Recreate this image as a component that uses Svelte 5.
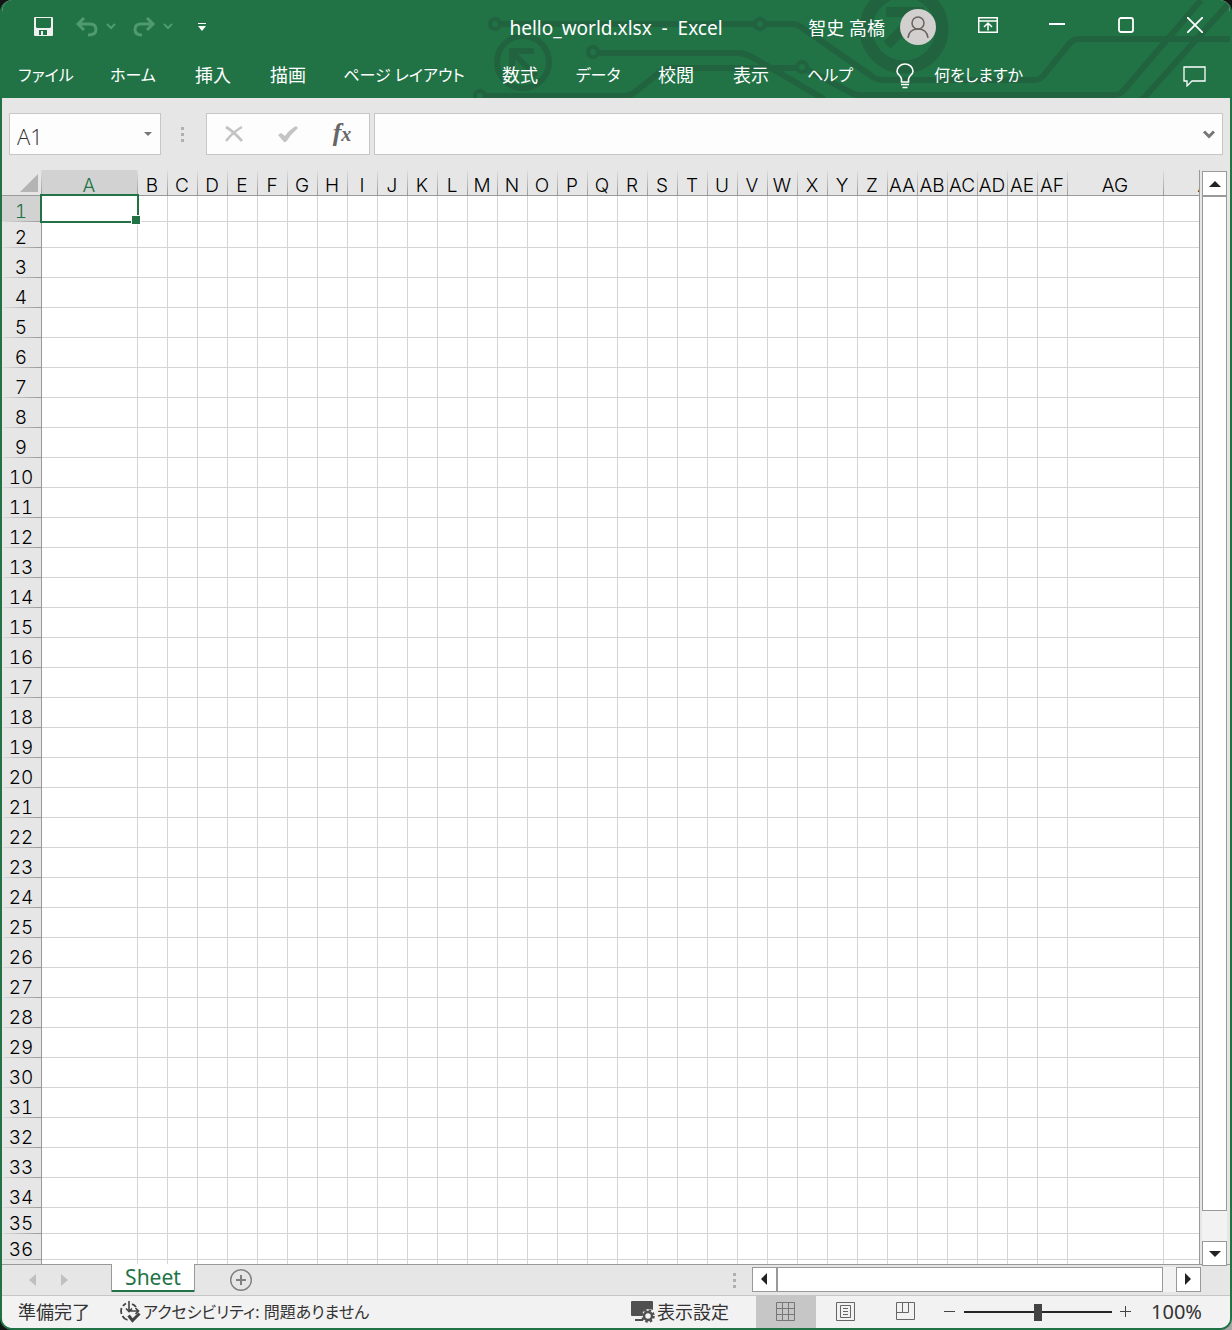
<script>
  const tabs = [
    { label: 'ファイル', kana: true },
    { label: 'ホーム', kana: true },
    { label: '挿入' },
    { label: '描画' },
    { label: 'ページ レイアウト', kana: true },
    { label: '数式' },
    { label: 'データ', kana: true },
    { label: '校閲' },
    { label: '表示' },
    { label: 'ヘルプ', kana: true }
  ];

  function columnName(index) {
    let name = '';
    for (let n = index + 1; n > 0; n = Math.floor((n - 1) / 26)) {
      name = String.fromCharCode(65 + ((n - 1) % 26)) + name;
    }
    return name;
  }

  const wideColumns = ['A', 'AG', 'AH'];
  const columns = Array.from({ length: 34 }, (_, i) => columnName(i));
  const rows = Array.from({ length: 36 }, (_, i) => i + 1);
  const isShort = (row) => row <= 2 || row >= 35;

  let zoom = $state(100);
  let formula = $state('');
  let cellName = $state('A1');
</script>

<div class="window">
  <header>
    <svg class="circuit" viewBox="470 0 762 98" width="762" height="98" aria-hidden="true">
      <g fill="none" stroke="#21633f" stroke-width="6">
        <path d="M501 24H754M766 24H792Q798 24 804 29L870 75Q876 80 884 80H1034Q1040 80 1044 75L1069 44Q1073 39 1079 39H1232" />
        <path d="M599 53H738Q744 53 752 57L824 99" />
        <path d="M486 96H624Q630 96 635 92L660 72Q665 68 671 68H796" />
        <path d="M808 70L850 92Q854 95 860 95H1114Q1120 95 1124 90L1201 0" />
        <path d="M1142 100L1230 2" />
        <circle cx="523" cy="62" r="26" />
        <path d="M509 51H534M512 48V72M512 52L536 76" />
      </g>
      <g fill="none" stroke="#21633f" stroke-width="4">
        <circle cx="495" cy="24" r="5" />
        <circle cx="760" cy="24" r="5" />
        <circle cx="593" cy="52" r="5" />
        <circle cx="802" cy="67" r="5" />
        <circle cx="480" cy="96" r="5" />
      </g>
      <g fill="none" stroke="#21633f">
        <circle cx="904" cy="29" r="38" stroke-width="13" />
        <path d="M886 12H924M887 45L920 12" stroke-width="10" />
      </g>
    </svg>

    <div class="titlebar">
      <div class="quick">
        <button class="save" aria-label="上書き保存">
          <svg width="20" height="20" viewBox="0 0 20 20">
            <path d="M0 1Q0 0 1 0H18Q19 0 19 1V18Q19 19 18 19H1Q0 19 0 18ZM2 1V10L3 11H16L17 10V1ZM5 13V18H7V14H9V18H13V13Z" fill="#f0f0f0" fill-rule="evenodd" />
          </svg>
        </button>
        <button class="history" aria-label="元に戻す">
          <svg width="42" height="20" viewBox="0 0 42 20" fill="none" stroke="#4f9a6e">
            <path d="M8 1L2 7L8 13M2 7H14Q20 7 20 12.500Q20 18 12 18" stroke-width="3" />
            <path d="M31 7L35 11L39 7" stroke-width="2" />
          </svg>
        </button>
        <button class="history" aria-label="やり直し">
          <svg width="42" height="20" viewBox="0 0 42 20" fill="none" stroke="#4f9a6e">
            <path d="M15 1L21 7L15 13M21 7H9Q3 7 3 12.500Q3 18 10 18" stroke-width="3" />
            <path d="M32 7L36 11L40 7" stroke-width="2" />
          </svg>
        </button>
        <button class="customize" aria-label="クイック アクセス ツール バーのユーザー設定">
          <svg width="8" height="8" viewBox="0 0 8 8" fill="#fff"><path d="M0 0H8V1H0ZM0 3H8L4 8Z" /></svg>
        </button>
      </div>

      <h1>hello_world.xlsx&nbsp; -&nbsp; Excel</h1>

      <div class="account">
        <button class="user">
          <span>智史 高橋</span>
          <svg width="36" height="36" viewBox="0 0 36 36" aria-hidden="true">
            <circle cx="18" cy="18" r="18" fill="#d2d0ce" />
            <g fill="none" stroke="#69625d" stroke-width="1.500">
              <circle cx="18" cy="14" r="6" />
              <path d="M8 29Q9 20 18 20Q27 20 28 29" />
            </g>
          </svg>
        </button>
        <button class="control" aria-label="リボンの表示オプション">
          <svg width="20" height="16" viewBox="0 0 20 16" fill="none" stroke="#fff" stroke-width="1.500">
            <path d="M.75 .75H19.250V15.250H.75ZM.75 4H19.250M10 13.500V7M6 10L10 6L14 10" />
          </svg>
        </button>
        <button class="control" aria-label="最小化">
          <svg width="16" height="16" viewBox="0 0 16 16"><path d="M0 7H16" stroke="#fff" stroke-width="2" /></svg>
        </button>
        <button class="control" aria-label="最大化">
          <svg width="16" height="16" viewBox="0 0 16 16"><rect x="1" y="1" width="14" height="14" rx="2" fill="none" stroke="#fff" stroke-width="1.800" /></svg>
        </button>
        <button class="control" aria-label="閉じる">
          <svg width="16" height="16" viewBox="0 0 16 16"><path d="M0 0L16 16M16 0L0 16" stroke="#fff" stroke-width="1.800" /></svg>
        </button>
      </div>
    </div>

    <nav>
      <div class="tabs">
        {#each tabs as tab}
          <button class:kana={tab.kana}>{tab.label}</button>
        {/each}
      </div>
      <button class="tell">
        <svg width="18" height="26" viewBox="0 0 18 26" fill="none" stroke="#fff" stroke-width="1.600">
          <path d="M5.500 19V16Q5 14 3.500 12.500Q1 10 1 8.500A8 7.500 0 0 1 17 8.500Q17 10 14.500 12.500Q13 14 12.500 16V19ZM5 21.500H13M6.500 24.500H11.500" />
        </svg>
        <span>何をしますか</span>
      </button>
      <button class="comments" aria-label="コメント">
        <svg width="23" height="21" viewBox="0 0 23 21" fill="none" stroke="#fff" stroke-width="1.300">
          <path d="M1 1H22V15H9L4 20V15H1Z" />
        </svg>
      </button>
    </nav>
  </header>

  <div class="formulabar">
    <div class="box namebox">
      <input aria-label="名前ボックス" bind:value={cellName} />
      <button aria-label="名前の一覧">
        <svg width="8" height="4" viewBox="0 0 8 4"><path d="M0 0H8L4 4Z" fill="#777" /></svg>
      </button>
    </div>
    <span class="grip"><i></i><i></i><i></i></span>
    <div class="box actions">
      <button aria-label="キャンセル">
        <svg width="18" height="18" viewBox="0 0 18 18" fill="none" stroke="#c3c3c3"><path d="M1 2Q8 6 17 16" stroke-width="2.800" /><path d="M17 2Q9 6 1 16" stroke-width="2.500" /></svg>
      </button>
      <button aria-label="入力">
        <svg width="20" height="18" viewBox="0 0 20 18"><path d="M0 10L3 8L7 11Q11 5 18 1L20 3Q13 9 8 17H6Z" fill="#c4c4c4" /></svg>
      </button>
      <button class="fx" aria-label="関数の挿入"><span>f</span><small>x</small></button>
    </div>
    <div class="box formula">
      <input aria-label="数式バー" bind:value={formula} />
      <button aria-label="数式バーの展開">
        <svg width="12" height="9" viewBox="0 0 12 9" fill="none"><path d="M1 1.500L6 6.500L11 1.500" stroke="#777" stroke-width="3" /></svg>
      </button>
    </div>
  </div>

  <div class="workspace">
    <div class="sheet">
      <table>
        <colgroup>
          <col class="c-head" />
          {#each columns as name}
            <col class={wideColumns.includes(name) ? 'c-wide' : 'c-cell'} />
          {/each}
        </colgroup>
        <thead>
          <tr>
            <th class="corner" aria-label="すべて選択">
              <svg width="18" height="18" viewBox="0 0 18 18"><path d="M18 0V18H0Z" fill="#b4b4b4" /></svg>
            </th>
            {#each columns as name}
              <th scope="col" class:active={name === 'A'}>{name}</th>
            {/each}
          </tr>
        </thead>
        <tbody>
          {#each rows as row}
            <tr class:short={isShort(row)}>
              <th scope="row" class:active={row === 1}>{row}</th>
              {#each columns as name}
                <td class:selected={row === 1 && name === 'A'}></td>
              {/each}
            </tr>
          {/each}
          <tr class="partial">
            <th></th>
            {#each columns as name}
              <td></td>
            {/each}
          </tr>
        </tbody>
      </table>
    </div>
    <div class="scroll vertical">
      <button aria-label="上へスクロール">
        <svg width="12" height="6" viewBox="0 0 12 6"><path d="M6 0L12 6H0Z" fill="#222" /></svg>
      </button>
      <div class="thumb"></div>
      <button aria-label="下へスクロール">
        <svg width="12" height="6" viewBox="0 0 12 6"><path d="M0 0H12L6 6Z" fill="#222" /></svg>
      </button>
    </div>
  </div>

  <div class="sheetbar">
    <div class="pager">
      <button aria-label="前のシート"><svg width="7" height="12" viewBox="0 0 7 12"><path d="M7 0V12L0 6Z" fill="#c0c0c0" /></svg></button>
      <button aria-label="次のシート"><svg width="7" height="12" viewBox="0 0 7 12"><path d="M0 0V12L7 6Z" fill="#c0c0c0" /></svg></button>
    </div>
    <button class="sheettab">Sheet</button>
    <button class="add" aria-label="新しいシート">
      <svg width="24" height="24" viewBox="0 0 24 24" fill="none" stroke="#808080">
        <circle cx="12" cy="12" r="10.300" stroke-width="1.400" /><path d="M7 12H17M12 7V17" stroke-width="2" />
      </svg>
    </button>
    <span class="grip"><i></i><i></i><i></i></span>
    <div class="scroll horizontal">
      <button aria-label="左へスクロール">
        <svg width="7" height="12" viewBox="0 0 7 12"><path d="M6 0V12L0 6Z" fill="#222" /></svg>
      </button>
      <div class="thumb"></div>
      <button aria-label="右へスクロール">
        <svg width="7" height="12" viewBox="0 0 7 12"><path d="M0 0V12L6 6Z" fill="#222" /></svg>
      </button>
    </div>
  </div>

  <footer>
    <span class="ready">準備完了</span>
    <button class="access">
      <svg width="22" height="22" viewBox="0 0 22 22" fill="none" stroke="#444">
        <path d="M7 2.500Q5 3.500 4 5M2.500 7Q1.500 10 2.500 13M3.500 15Q5 18 8.500 19M13 3Q15.500 4 17 6" stroke-width="1.800" />
        <path d="M10 0V10.500M7 7.500L10 10.500L13 7.500M10 10H19.500M16.500 7L19.500 10L16.500 13" stroke-width="1.600" />
        <path d="M9.500 14.500L13.500 19.500L20.500 12.500" stroke-width="3" />
      </svg>
      <span>アクセシビリティ: 問題ありません</span>
    </button>
    <button class="display">
      <svg width="24" height="22" viewBox="0 0 24 22">
        <path d="M1 0H21Q22 0 22 1V9Q18 7 14 9Q11 11 11 15H1Q0 15 0 14V1Q0 0 1 0ZM4 18H12V20H4Z" fill="#505050" />
        <circle cx="17" cy="15" r="4" fill="none" stroke="#505050" stroke-width="2.500" />
        <circle cx="17" cy="15" r="5.800" fill="none" stroke="#505050" stroke-width="2" stroke-dasharray="2.500 2.055" />
      </svg>
      <span>表示設定</span>
    </button>
    <div class="views">
      <button class="on" aria-label="標準">
        <svg width="20" height="19" viewBox="0 0 20 19" fill="none" stroke="#777"><path d="M.5 .5H18.500V18.500H.5ZM.5 6.500H18.500M.5 12.500H18.500M6.500 .5V18.500M12.500 .5V18.500" /></svg>
      </button>
      <button aria-label="ページ レイアウト">
        <svg width="20" height="19" viewBox="0 0 20 19" fill="none" stroke="#666"><path d="M.5 .5H18.500V18.500H.5ZM4.500 3.500H14.500V15.500H4.500ZM7 6.500H12M7 9.500H12M7 12.500H12" /></svg>
      </button>
      <button aria-label="改ページ プレビュー">
        <svg width="20" height="19" viewBox="0 0 20 19" fill="none" stroke="#666"><path d="M.5 .5H18.500V17.500H.5ZM.5 10.500H12.500V.5M6.500 .5V10.500" /></svg>
      </button>
    </div>
    <div class="zoom">
      <button aria-label="縮小"><svg width="12" height="12" viewBox="0 0 12 12"><path d="M0 5.500H11" stroke="#444" /></svg></button>
      <input type="range" min="0" max="200" aria-label="ズーム" bind:value={zoom} />
      <button aria-label="拡大"><svg width="12" height="12" viewBox="0 0 12 12"><path d="M0 5.500H11M5.500 0V11" stroke="#444" /></svg></button>
      <output>{zoom}%</output>
    </div>
  </footer>
</div>

<style>
  :global(body) {
    background: linear-gradient(135deg, #141414 60%, #a8a8a8 100%);
  }

  .window,
  .window * {
    box-sizing: border-box;
  }

  .window {
    display: flex;
    flex-direction: column;
    min-height: 100vh;
    border: solid #217346;
    border-width: 0 2px 2px;
    border-radius: 12px;
    overflow: hidden;
    background: #e6e6e6;
    color: #333;
    font-family: 'Noto Sans', 'Noto Sans CJK JP', sans-serif;
    font-size: 18px;
    font-feature-settings: 'palt';
  }

  button,
  input {
    margin: 0;
    padding: 0;
    border: 0;
    background: none;
    color: inherit;
    font: inherit;
    font-feature-settings: inherit;
  }

  button {
    display: flex;
    align-items: center;
    justify-content: center;
    white-space: nowrap;
  }

  svg {
    display: block;
    flex: none;
  }

  header {
    position: relative;
    background: #217346;
    color: #fff;
  }

  .circuit {
    position: absolute;
    top: 0;
    right: -2px;
  }

  .titlebar,
  nav {
    position: relative;
    display: grid;
    align-items: center;
  }

  .titlebar {
    grid-template-columns: 1fr auto 1fr;
    height: 54px;
  }

  .quick {
    display: flex;
    align-items: center;
    padding-left: 32px;
  }

  .save {
    margin-right: 22px;
  }

  .history {
    margin-right: 14px;
  }

  .customize {
    margin-left: 10px;
  }

  h1 {
    margin: 0;
    padding-top: 2px;
    font-size: 19px;
    font-weight: 400;
    line-height: 24px;
    white-space: nowrap;
  }

  .account {
    display: flex;
    align-items: center;
    justify-content: flex-end;
    padding-right: 1px;
  }

  .user {
    gap: 15px;
    margin-right: 17px;
  }

  .control {
    width: 69px;
    height: 50px;
    margin-bottom: 4px;
  }

  nav {
    grid-template-columns: auto auto 1fr;
    height: 44px;
  }

  .tabs {
    display: grid;
    grid-template-columns: 88px 86px 74px 76px 156px 76px 80px 76px 74px 84px;
    padding-bottom: 4px;
  }

  .kana {
    font-size: 16px;
  }

  .tell {
    gap: 20px;
    margin-left: 24px;
    font-size: 16px;
  }

  .tell span {
    padding-bottom: 4px;
  }

  .comments {
    justify-self: end;
    margin-right: 24px;
  }

  .formulabar {
    display: flex;
    align-items: center;
    height: 72px;
    padding: 0 7px;
  }

  .box {
    display: flex;
    align-items: center;
    height: 42px;
    border: 1px solid #c6c6c6;
    background: #fdfdfd;
  }

  .namebox {
    width: 152px;
    padding: 0 8px 0 7px;
  }

  .box input {
    flex: 1;
    min-width: 0;
    height: 40px;
    outline: 0;
  }

  .namebox input {
    padding-top: 4px;
    font-family: 'Open Sans', sans-serif;
    font-size: 22px;
    font-weight: 300;
  }

  .grip {
    display: grid;
    gap: 3px;
  }

  .grip i {
    width: 3px;
    height: 3px;
    background: #b0b0b0;
  }

  .formulabar .grip {
    margin: 0 22px 0 20px;
  }

  .actions {
    width: 164px;
    margin-right: 4px;
  }

  .actions button {
    flex: 1;
    height: 40px;
  }

  .actions .fx {
    align-items: baseline;
    color: #666;
    font-family: 'Liberation Serif', serif;
    font-size: 26px;
    font-style: italic;
    font-weight: 700;
    line-height: 38px;
  }

  .fx small {
    font-size: 20px;
  }

  .formula {
    flex: 1;
    padding: 0 7px;
  }

  .workspace {
    display: flex;
    flex: 1;
    min-width: 0;
    padding-right: 3px;
    border-bottom: 1px solid #999;
  }

  .sheet {
    flex: 1;
    min-width: 0;
    overflow: hidden;
    margin-right: 2px;
    border-right: 1px solid #999;
  }

  table {
    width: 1258px;
    table-layout: fixed;
    border-spacing: 0;
    color: #000;
    font-family: 'Inter', 'Liberation Sans', sans-serif;
    font-size: 19px;
    font-variant-numeric: tabular-nums;
    line-height: 20px;
  }

  .c-head {
    width: 40px;
  }

  .c-cell {
    width: 30px;
  }

  .c-wide {
    width: 96px;
  }

  th {
    padding: 0;
    font-weight: 300;
    vertical-align: bottom;
    white-space: nowrap;
  }

  thead th {
    height: 26px;
    padding-right: 2px;
    border-bottom: 1px solid #999;
    background: linear-gradient(#e0e0e0, #999) right / 1px 100% no-repeat;
    line-height: 18px;
  }

  tbody th {
    height: 30px;
    padding-right: 1px;
    border-right: 1px solid #999;
    background: linear-gradient(90deg, #dcdcdc, #999) bottom / 100% 1px no-repeat;
  }

  th.active {
    background-color: #d2d2d2;
    color: #217346;
  }

  .corner {
    padding: 0 3px 3px 18px;
  }

  td {
    position: relative;
    padding: 0;
    border: solid #d4d4d4;
    border-width: 0 1px 1px 0;
    background: #fff;
  }

  .short th {
    height: 26px;
  }

  .partial th {
    height: 4px;
    background: none;
  }

  .partial td {
    border-bottom: 0;
  }

  .selected::before {
    content: '';
    position: absolute;
    z-index: 1;
    inset: -2px;
    border: 2px solid #217346;
  }

  .selected::after {
    content: '';
    position: absolute;
    z-index: 2;
    right: -4px;
    bottom: -4px;
    width: 8px;
    height: 8px;
    border: 1px solid #fff;
    background: #217346;
  }

  .scroll {
    display: flex;
    background: #f2f2f2;
  }

  .scroll button,
  .thumb {
    border: 1px solid #999;
    background: #fff;
  }

  .scroll button {
    width: 25px;
    height: 25px;
  }

  .thumb {
    flex: 1;
  }

  .vertical {
    flex-direction: column;
    margin: 1px 0 -2px;
  }

  .vertical .thumb {
    margin-bottom: 30px;
  }

  .sheetbar {
    display: flex;
    align-items: center;
    height: 31px;
    padding-right: 29px;
    border-bottom: 1px solid #c6c6c6;
  }

  .pager {
    display: flex;
    gap: 25px;
    width: 109px;
    padding-left: 27px;
  }

  .sheettab {
    align-self: flex-start;
    width: 84px;
    height: 28px;
    margin-top: -1px;
    padding-bottom: 2px;
    border: solid #999;
    border-width: 0 1px;
    box-shadow: inset 0 -2px #217346;
    background: #fff;
    color: #217346;
    font-size: 21px;
    line-height: 24px;
  }

  .add {
    margin-left: 34px;
  }

  .sheetbar .grip {
    margin: 0 16px 0 auto;
  }

  .horizontal {
    width: 449px;
    margin-bottom: 2px;
  }

  .horizontal .thumb {
    margin-right: 13px;
  }

  footer {
    display: flex;
    align-items: center;
    height: 32px;
    padding-right: 28px;
    background: #f2f2f2;
  }

  .ready {
    margin: 0 29px 0 16px;
    white-space: nowrap;
  }

  .access {
    gap: 2px;
    font-size: 16px;
  }

  .display {
    gap: 2px;
    margin: 0 27px 0 auto;
  }

  .ready,
  .access span,
  .display span {
    padding-bottom: 2px;
  }

  .views {
    display: flex;
  }

  .views button {
    width: 60px;
    height: 32px;
    padding-bottom: 2px;
  }

  .views .on {
    background: #c6c6c6;
  }

  .zoom {
    display: flex;
    align-items: center;
    gap: 8px;
    margin-left: 8px;
  }

  .zoom input {
    width: 148px;
    height: 17px;
    appearance: none;
    background: linear-gradient(#262626, #262626) center / 100% 2px no-repeat;
  }

  .zoom input::-webkit-slider-thumb {
    appearance: none;
    width: 8px;
    height: 17px;
    background: #444;
  }

  output {
    width: 54px;
    margin-left: 8px;
    font-size: 20px;
    line-height: 24px;
    text-align: right;
  }
</style>
